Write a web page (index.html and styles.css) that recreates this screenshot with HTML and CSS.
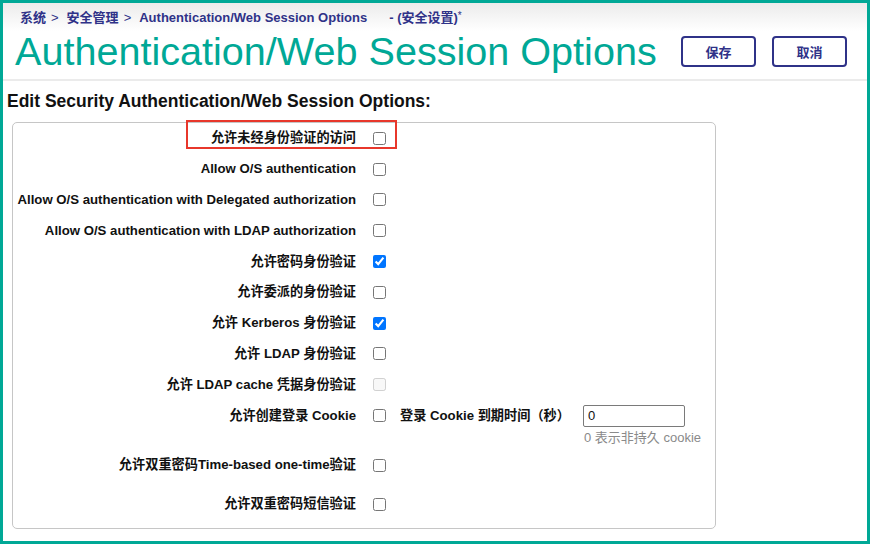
FILE: index.html
```html
<!DOCTYPE html>
<html lang="zh-CN">
<head>
<meta charset="utf-8">
<title>Authentication/Web Session Options</title>
<link rel="stylesheet" href="styles.css">
</head>
<body>
<div class="frame">
  <header class="page-header">
    <div class="breadcrumb">
      <a class="crumb">系统</a><span class="sep">&gt;</span><a class="crumb">安全管理</a><span class="sep">&gt;</span><span class="crumb">Authentication/Web Session Options</span><span class="suffix">- (安全设置)<span class="star">*</span></span>
    </div>
    <div class="title-row">
      <h1 class="title">Authentication/Web Session Options</h1>
      <div class="actions">
        <button class="btn">保存</button>
        <button class="btn">取消</button>
      </div>
    </div>
  </header>
  <main class="content">
    <h2 class="section-title">Edit Security Authentication/Web Session Options:</h2>
    <div class="options">
      <div class="highlight"></div>
      <div class="row"><span class="label">允许未经身份验证的访问</span><input type="checkbox"></div>
      <div class="row"><span class="label">Allow O/S authentication</span><input type="checkbox"></div>
      <div class="row"><span class="label">Allow O/S authentication with Delegated authorization</span><input type="checkbox"></div>
      <div class="row"><span class="label">Allow O/S authentication with LDAP authorization</span><input type="checkbox"></div>
      <div class="row"><span class="label">允许密码身份验证</span><input type="checkbox" checked></div>
      <div class="row"><span class="label">允许委派的身份验证</span><input type="checkbox"></div>
      <div class="row"><span class="label">允许 Kerberos 身份验证</span><input type="checkbox" checked></div>
      <div class="row"><span class="label">允许 LDAP 身份验证</span><input type="checkbox"></div>
      <div class="row"><span class="label">允许 LDAP cache 凭据身份验证</span><input type="checkbox" disabled></div>
      <div class="row-cookie">
        <span class="label">允许创建登录 Cookie</span>
        <input type="checkbox" class="cookie-check">
        <span class="cookie-label">登录 Cookie 到期时间（秒）</span>
        <input type="text" class="cookie-input" value="0">
        <span class="hint">0 表示非持久 cookie</span>
      </div>
      <div class="row row-totp"><span class="label">允许双重密码Time-based one-time验证</span><input type="checkbox"></div>
      <div class="row row-sms"><span class="label">允许双重密码短信验证</span><input type="checkbox"></div>
    </div>
  </main>
</div>
</body>
</html>
```
FILE: styles.css
```css
html, body {
  margin: 0;
  padding: 0;
  background: #ffffff;
}

body {
  width: 872px;
  height: 544px;
  font-family: "Liberation Sans", Arial, "Noto Sans CJK SC", sans-serif;
  color: #111111;
  overflow: hidden;
}

.frame {
  width: 870px;
  height: 544px;
  box-sizing: border-box;
  border: 3px solid #00a896;
  overflow: hidden;
}

.page-header {
  background: linear-gradient(#ebebeb 0px, #ffffff 28px);
  padding-top: 5px;
  padding-bottom: 4px;
  border-bottom: 2px solid #ebebeb;
}

.breadcrumb {
  padding-left: 17px;
  font-size: 13px;
  line-height: 15px;
  font-weight: 700;
  color: #2f3288;
  white-space: nowrap;
}

.crumb {
  color: #2f3288;
  text-decoration: none;
}

.sep {
  font-weight: 400;
  margin: 0 8px 0 5px;
  color: #2f3288;
}

.suffix {
  margin-left: 22px;
}

.star {
  font-size: 10px;
  vertical-align: 3px;
  font-weight: 400;
}

.title-row {
  display: flex;
  align-items: center;
  height: 48px;
  margin-top: 2px;
  padding-left: 12px;
  padding-right: 20px;
}

.title {
  margin: 0;
  font-size: 39.6px;
  font-weight: 400;
  line-height: normal;
  color: #00a896;
  white-space: nowrap;
}

.actions {
  margin-left: auto;
  display: flex;
  gap: 16px;
}

.btn {
  width: 75px;
  height: 31px;
  box-sizing: border-box;
  border: 2px solid #2f3288;
  border-radius: 4px;
  background: #ffffff;
  color: #2f3288;
  font-family: "Liberation Sans", Arial, "Noto Sans CJK SC", sans-serif;
  font-size: 13px;
  font-weight: 700;
  padding: 0;
}

.content {
  padding: 0;
}

.section-title {
  margin: 10px 0 11px 4px;
  font-size: 17.5px;
  line-height: 20px;
  font-weight: 700;
  color: #111111;
  white-space: nowrap;
}

.options {
  position: relative;
  margin-left: 9px;
  width: 704px;
  box-sizing: border-box;
  border: 1px solid #c6c6c6;
  border-radius: 5px;
  padding: 0 0 8px 0;
}

.highlight {
  position: absolute;
  left: 173px;
  top: -3px;
  width: 211px;
  height: 29px;
  box-sizing: border-box;
  border: 2px solid #e8372b;
  pointer-events: none;
}

.row {
  display: flex;
  align-items: center;
  height: 30.8px;
}

.label {
  flex-shrink: 0;
  width: 343px;
  text-align: right;
  font-size: 13.2px;
  line-height: 16px;
  font-weight: 700;
  color: #111111;
  white-space: nowrap;
}

input[type="checkbox"] {
  width: 13px;
  height: 13px;
  margin: 0 0 0 17px;
}

.row-cookie {
  display: grid;
  grid-template-columns: 343px 30px 183px auto;
  grid-template-rows: 30.8px auto;
  align-items: center;
}

.row-cookie .label {
  grid-column: 1;
  grid-row: 1;
}

.row-cookie .cookie-check {
  grid-column: 2;
  grid-row: 1;
}

.cookie-label {
  grid-column: 3;
  grid-row: 1;
  padding-left: 14px;
  font-size: 13.2px;
  line-height: 16px;
  font-weight: 700;
  white-space: nowrap;
}

.cookie-input {
  grid-column: 4;
  grid-row: 1;
  justify-self: start;
  margin-left: 14px;
  width: 102px;
  height: 22px;
  box-sizing: border-box;
  border: 1px solid #7a7a7a;
  border-radius: 2px;
  padding: 0 4px;
  font-family: "Liberation Sans", Arial, sans-serif;
  font-size: 13px;
  color: #111111;
}

.hint {
  grid-column: 4;
  grid-row: 2;
  margin-left: 15px;
  font-size: 13px;
  line-height: 14px;
  color: #8a8a8a;
  white-space: nowrap;
}

.row-totp {
  margin-top: 5px;
}

.row-sms {
  margin-top: 8px;
}
```
